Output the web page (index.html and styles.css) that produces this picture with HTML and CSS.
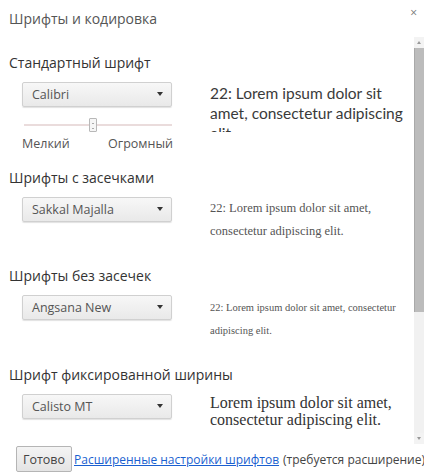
FILE: index.html
```html
<!DOCTYPE html>
<html lang="ru">
<head>
<meta charset="utf-8">
<title>Шрифты и кодировка</title>
<link rel="stylesheet" href="styles.css">
</head>
<body>
<div class="dialog">
  <header class="title-row">
    <h1 class="title">Шрифты и кодировка</h1>
    <span class="close">×</span>
  </header>
  <div class="scroll-area">
    <div class="content">
      <section class="font-section first">
        <h2 class="heading">Стандартный шрифт</h2>
        <div class="row">
          <div class="controls">
            <div class="select"><span>Calibri</span><span class="caret"></span></div>
            <div class="slider"><div class="track"></div><span class="thumb"></span></div>
            <div class="slider-labels"><span>Мелкий</span><span>Огромный</span></div>
          </div>
          <div class="sample sample-standard">22: Lorem ipsum dolor sit amet, consectetur adipiscing elit.</div>
        </div>
      </section>
      <section class="font-section compact">
        <h2 class="heading">Шрифты с засечками</h2>
        <div class="row">
          <div class="controls">
            <div class="select"><span>Sakkal Majalla</span><span class="caret"></span></div>
          </div>
          <div class="sample sample-serif">22: Lorem ipsum dolor sit amet, consectetur adipiscing elit.</div>
        </div>
      </section>
      <section class="font-section">
        <h2 class="heading">Шрифты без засечек</h2>
        <div class="row">
          <div class="controls">
            <div class="select"><span>Angsana New</span><span class="caret"></span></div>
          </div>
          <div class="sample sample-sans">22: Lorem ipsum dolor sit amet, consectetur adipiscing elit.</div>
        </div>
      </section>
      <section class="font-section">
        <h2 class="heading">Шрифт фиксированной ширины</h2>
        <div class="row">
          <div class="controls">
            <div class="select"><span>Calisto MT</span><span class="caret"></span></div>
          </div>
          <div class="sample sample-fixed">Lorem ipsum dolor sit amet, consectetur adipiscing elit.</div>
        </div>
      </section>
    </div>
    <div class="scrollbar">
      <div class="arrow arrow-up"></div>
      <div class="sb-thumb"></div>
      <div class="sb-track"></div>
      <div class="arrow arrow-down"></div>
    </div>
  </div>
  <footer class="footer">
    <button class="btn">Готово</button>
    <a class="link" href="#">Расширенные настройки шрифтов</a>
    <span class="note">(требуется расширение)</span>
  </footer>
</div>
</body>
</html>
```
FILE: styles.css
```css
* { box-sizing: border-box; }
html, body { margin: 0; padding: 0; background: #fff; }
body { font-family: "Open Sans", "Noto Sans", sans-serif; color: #333; width: 424px; height: 472px; overflow: hidden; }

.dialog { display: flex; flex-direction: column; height: 472px; }

.title-row { display: flex; justify-content: space-between; align-items: flex-start; height: 36px; padding: 9px 0 0 9px; }
.title { margin: 0; font-size: 14px; line-height: 20px; font-weight: 400; color: #555; }
.close { font-size: 12px; line-height: 12px; color: #777; margin: -2px 7px 0 0; }

.scroll-area { display: flex; height: 409px; overflow: hidden; }
.content { flex: 1; padding-left: 9px; }

.font-section { margin-top: 23px; }
.font-section.first { margin-top: 17px; }
.font-section.compact { margin-top: 16px; }
.heading { margin: 0 0 9px; font-size: 14px; line-height: 20px; font-weight: 400; color: #333; }

.row { display: flex; align-items: flex-start; }
.controls { width: 201px; padding-left: 13px; flex-shrink: 0; }

.select { width: 150px; height: 25px; display: flex; align-items: center; justify-content: space-between; padding: 0 8px 0 9px; border: 1px solid #d0d0d0; border-radius: 2px; background: linear-gradient(#f7f7f7, #e9e9e9); box-shadow: 0 1px 1px rgba(0,0,0,0.12); font-size: 12.5px; color: #555; }
.caret { width: 0; height: 0; border-left: 3.5px solid transparent; border-right: 3.5px solid transparent; border-top: 4px solid #333; }

.slider { position: relative; width: 150px; height: 14px; margin-top: 11px; display: flex; align-items: center; }
.track { width: 149px; height: 2px; margin-left: 2px; background: #eadcdc; }
.thumb { position: absolute; left: 67px; top: 0; width: 8px; height: 14px; border: 1px solid #b8b8b8; border-radius: 1px; background: #f6f6f6; }
.thumb::after { content: ""; position: absolute; left: 2px; top: 4px; width: 2px; height: 4px; border-top: 1px solid #aaa; border-bottom: 1px solid #aaa; }

.slider-labels { width: 151px; display: flex; justify-content: space-between; margin-top: 4px; font-size: 12.5px; line-height: 16px; color: #555; }

.sample { width: 200px; }
.sample-standard { font-family: Lato, "Open Sans", sans-serif; font-size: 15.5px; line-height: 20px; color: #3a3a3a; height: 49px; overflow: hidden; margin-top: 1px; }
.sample-serif { font-family: "Liberation Serif", serif; font-size: 12.5px; line-height: 23px; color: #555; }
.sample-sans { font-family: "Liberation Serif", serif; font-size: 10.5px; line-height: 23px; color: #555; margin-top: 1px; }
.sample-fixed { font-family: "Liberation Serif", serif; font-size: 16px; line-height: 17px; color: #333; }

.scrollbar { width: 10px; display: flex; flex-direction: column; background: #f1f1f1; margin-top: 1px; }
.arrow { height: 11px; background: #f3f3f3; display: flex; align-items: center; justify-content: center; }
.arrow-up::after { content: ""; border-left: 2.5px solid transparent; border-right: 2.5px solid transparent; border-bottom: 3px solid #999; }
.arrow-down::after { content: ""; border-left: 2.5px solid transparent; border-right: 2.5px solid transparent; border-top: 3px solid #999; }
.sb-thumb { height: 264px; background: #bcbcbc; border-left: 1px solid #a9a9a9; }
.sb-track { flex: 1; background: #f1f1f1; }

.footer { display: flex; align-items: center; padding: 2px 0 0 16px; font-size: 12px; white-space: nowrap; }
.btn { font-family: inherit; font-size: 12.5px; color: #444; height: 26px; width: 56px; padding: 0; flex-shrink: 0; border: 1px solid #b5b5b5; border-radius: 2px; background: linear-gradient(#f4f4f4, #e4e4e4); margin-right: 2px; }
.link { color: #1a5fd0; text-decoration: underline; margin-right: 4px; }
.note { color: #444; }
```
